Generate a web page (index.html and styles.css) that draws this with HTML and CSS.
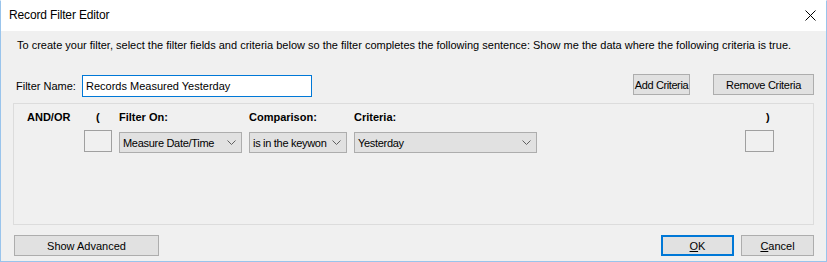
FILE: index.html
```html
<!DOCTYPE html>
<html lang="en">
    <head>
        <meta charset="UTF-8" />
        <title>Record Filter Editor</title>
        <link rel="stylesheet" href="styles.css">
    </head>
    <body>
        <div class="window">
            <div class="titlebar">
                <span class="title">Record Filter Editor</span>
                <svg class="close" width="11" height="11" viewBox="0 0 11 11">
                    <path d="M0.5 0.5 L10.5 10.5 M10.5 0.5 L0.5 10.5" stroke="#000" stroke-width="1" fill="none" />
                </svg>
            </div>
            <div class="content">
                <p class="intro">To create your filter, select the filter fields and criteria below so the filter completes the following sentence: Show me the data where the following criteria is true.</p>
                <div class="name-row">
                    <label class="name-label" for="filterName">Filter Name:</label>
                    <input class="name-input" id="filterName" type="text" value="Records Measured Yesterday" />
                    <div class="spacer"></div>
                    <button class="btn btn-add">Add Criteria</button>
                    <button class="btn btn-remove">Remove Criteria</button>
                </div>
                <div class="group">
                    <div class="grid">
                        <div class="head">AND/OR</div>
                        <div class="head head-open">(</div>
                        <div class="head">Filter On:</div>
                        <div class="head">Comparison:</div>
                        <div class="head">Criteria:</div>
                        <div></div>
                        <div class="head head-close">)</div>

                        <div></div>
                        <div class="paren-box"></div>
                        <div class="combo"><span>Measure Date/Time</span><svg width="9" height="5" viewBox="0 0 9 5"><path d="M0.5 0.5 L4.5 4.5 L8.5 0.5" stroke="#606060" fill="none" /></svg></div>
                        <div class="combo"><span>is in the keywon</span><svg width="9" height="5" viewBox="0 0 9 5"><path d="M0.5 0.5 L4.5 4.5 L8.5 0.5" stroke="#606060" fill="none" /></svg></div>
                        <div class="combo"><span>Yesterday</span><svg width="9" height="5" viewBox="0 0 9 5"><path d="M0.5 0.5 L4.5 4.5 L8.5 0.5" stroke="#606060" fill="none" /></svg></div>
                        <div></div>
                        <div class="paren-box"></div>
                    </div>
                </div>
                <div class="footer">
                    <button class="btn btn-advanced">Show Advanced</button>
                    <div class="spacer"></div>
                    <button class="btn btn-ok"><u>O</u>K</button>
                    <button class="btn btn-cancel"><u>C</u>ancel</button>
                </div>
            </div>
        </div>
    </body>
</html>
```

FILE: styles.css
```css
body {
    margin: 0;
    font-family: "Liberation Sans", Arial, sans-serif;
    font-size: 11px;
    color: #000;
    background: #f0f0f0;
}
.window {
    width: 827px;
    height: 262px;
    box-sizing: border-box;
    border: 1px solid #99c4ec;
    border-top-color: #ffffff;
    background: #f0f0f0;
    display: flex;
    flex-direction: column;
}
.titlebar {
    height: 30px;
    background: #fff;
    display: flex;
    align-items: center;
    justify-content: space-between;
    padding: 0 10px 0 8px;
}
.title {
    font-size: 12px;
    letter-spacing: -0.15px;
    padding-bottom: 2px;
}
.close {
    margin-top: -2px;
}
.content {
    flex: 1;
    padding: 0 12px;
    display: flex;
    flex-direction: column;
}
.intro {
    margin: 8px 0 0 4px;
    line-height: 13px;
    white-space: nowrap;
}
.name-row {
    display: flex;
    align-items: flex-start;
    margin-top: 22px;
    height: 29px;
}
.name-label {
    margin: 6px 0 0 3px;
    width: 66px;
}
.name-input {
    box-sizing: border-box;
    width: 230px;
    height: 22px;
    margin: 1px 0 0 0;
    padding: 0 3px;
    border: 1px solid #0078d7;
    font: inherit;
    outline: none;
}
.spacer {
    flex: 1;
}
.btn {
    box-sizing: border-box;
    height: 21px;
    padding: 0;
    border: 1px solid #adadad;
    background: #e1e1e1;
    font: inherit;
    color: #000;
    white-space: nowrap;
}
.btn-add {
    width: 57px;
    letter-spacing: -0.4px;
}
.btn-remove {
    width: 101px;
    margin-left: 23px;
    letter-spacing: -0.3px;
}
.group {
    box-sizing: border-box;
    height: 122px;
    border: 1px solid #dcdcdc;
    padding: 7px 39px 0 13px;
}
.grid {
    display: grid;
    grid-template-columns: 50px 28px 123px 98px 183px 1fr 29px;
    column-gap: 7px;
    row-gap: 6px;
}
.head {
    font-weight: bold;
    line-height: 13px;
}
.head-open {
    padding-left: 12px;
}
.head-close {
    padding-left: 21px;
}
.paren-box {
    box-sizing: border-box;
    height: 22px;
    border: 1px solid #a0a0a0;
}
.combo {
    box-sizing: border-box;
    height: 21px;
    margin-top: 2px;
    border: 1px solid #adadad;
    background: #e1e1e1;
    display: flex;
    align-items: center;
    justify-content: space-between;
    padding: 0 5px 0 3px;
    white-space: nowrap;
    letter-spacing: -0.3px;
}
.combo svg {
    flex: none;
    margin-left: 2px;
}
.footer {
    display: flex;
    margin-top: 10px;
    padding-left: 1px;
}
.btn-advanced {
    width: 145px;
}
.btn-ok {
    width: 73px;
    border: 2px solid #0078d7;
}
.btn-cancel {
    width: 73px;
    margin-left: 7px;
}
```
